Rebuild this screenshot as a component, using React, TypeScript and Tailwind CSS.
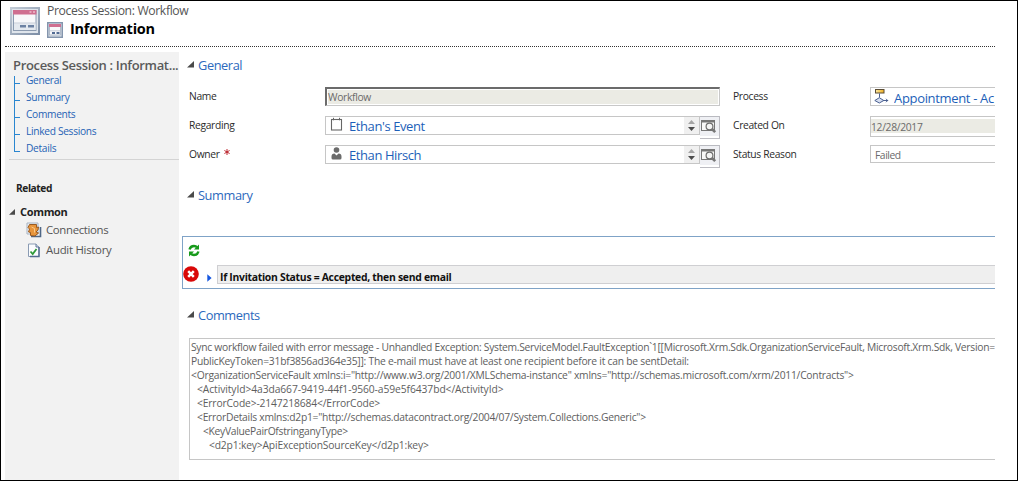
import type { ReactNode } from "react";

function LargeWindowIcon() {
  return (
    <svg className="h-[28px] w-[30px]" viewBox="0 0 30 28">
      <defs>
        <linearGradient id="winframe" x1="0" y1="0" x2="1" y2="1">
          <stop offset="0" stopColor="#c3ccd6" />
          <stop offset="1" stopColor="#7d8ea6" />
        </linearGradient>
      </defs>
      <rect x="1" y="1" width="28" height="26" fill="#dfe5ec" stroke="url(#winframe)" strokeWidth="2" />
      <rect x="3.500" y="3.500" width="22.500" height="20" fill="#f8f8fa" stroke="#8c9bb0" />
      <rect x="3" y="3" width="23.500" height="4.500" fill="#cf6f90" />
      <path d="M19.500 4h2v2h-2zM23 4h2v2h-2z" fill="#e6a9bc" />
      <rect x="4" y="16.500" width="21.500" height="6.500" fill="#e4e9ef" />
      <path d="M4 16h21.500" stroke="#b9c2ce" strokeWidth="0.800" />
      <path d="M10 18h6v2.500h-6zM18 18h6v2.500h-6z" fill="#6d82a3" />
    </svg>
  );
}

function SmallWindowIcon() {
  return (
    <svg className="h-[16px] w-[16px]" viewBox="0 0 16 16">
      <rect x="0.750" y="0.750" width="14.500" height="14.500" fill="#dfe5ec" stroke="#8495ad" strokeWidth="1.500" />
      <rect x="2.500" y="2.500" width="11" height="10.500" fill="#f8f8fa" stroke="#a3afbf" strokeWidth="0.800" />
      <rect x="2" y="2" width="12" height="3" fill="#cf6f90" />
      <path d="M5 10h3v2H5zM9.500 10h3v2h-3z" fill="#526b93" />
      <path d="M3 8.800h10" stroke="#b9c2ce" strokeWidth="0.800" />
    </svg>
  );
}

function Corner({ className }: { className: string }) {
  return (
    <svg className={className} viewBox="0 0 7 7">
      <path d="M7 0v6.6H0z" fill="#4a4a4a" />
    </svg>
  );
}

function Heading({ children }: { children: ReactNode }) {
  return (
    <h2 className="flex h-[26px] items-center pt-[2px] pl-[8px] text-[12.8px] tracking-[-0.42px] text-[#2c69bd]">
      <Corner className="mr-[4px] mb-[4px] h-[7px] w-[7px]" />
      {children}
    </h2>
  );
}

function Label({ children, required }: { children: string; required?: boolean }) {
  return (
    <div className="flex h-[18px] text-[10.3px] leading-[19px] tracking-[-0.34px] text-[#2b2b2b]">
      {children}
      {required && (
        <svg className="mt-[4px] ml-[4px] h-[6px] w-[6px]" viewBox="0 0 6 6">
          <path d="M3 0v6M0.400 1.500l5.200 3M5.600 1.500l-5.200 3" stroke="#b5121b" strokeWidth="0.900" />
        </svg>
      )}
    </div>
  );
}

function Lookup({ icon, children }: { icon: ReactNode; children: string }) {
  return (
    <div className="flex w-[395px]">
      <div className="flex h-[19px] w-[375px] border border-[#c6c6c6]">
        <div className="flex w-[23px] justify-start pl-[4px]">{icon}</div>
        <span className="flex-1 text-[13px] leading-[19px] tracking-[-0.41px] text-[#1d5fb8]">{children}</span>
        <div className="flex w-[15px] items-center justify-center bg-[#f0f0f0]">
          <svg className="h-[11px] w-[7px]" viewBox="0 0 7 11">
            <path d="M0 4L3.5 0 7 4z" fill="#a5a5a5" />
            <path d="M0 7h7l-3.500 4z" fill="#4c4c4c" />
          </svg>
        </div>
      </div>
      <svg className="h-[24px] w-[20px]" viewBox="0 0 20 24">
        <rect width="19.500" height="23" fill="#eff0f4" />
        <path d="M0 0.500h19.500" stroke="#b9bac0" />
        <path d="M19.500 0v23M0 22.500h20" stroke="#bcbcc2" />
        <rect x="0" y="20" width="19" height="2" fill="#fff" />
        <rect x="1.500" y="4.500" width="13" height="10" fill="#f9f9f9" stroke="#777" />
        <path d="M1 4h14v2.500H1z" fill="#777" />
        <circle cx="9.500" cy="10.500" r="3.400" fill="#f4f4f4" stroke="#6d6d6d" strokeWidth="1.200" />
        <path d="M12 13l3.200 3.200" stroke="#777" strokeWidth="2.600" />
      </svg>
    </div>
  );
}

const sections = ["General", "Summary", "Comments", "Linked Sessions", "Details"];

function Sidebar() {
  return (
    <aside className="flex w-[174px] shrink-0 flex-col bg-[#f2f2f2]">
      <div className="h-[24px] pl-[8px] text-[13px] leading-[27px] font-semibold tracking-[-0.34px] whitespace-nowrap text-[#5a5a5a]">
        Process Session : Informat...
      </div>
      <nav className="ml-[9px] flex h-[76px] flex-col border-l border-[#2a86d0]">
        {sections.map((s) => (
          <a key={s} className="flex h-[17px] shrink-0 text-[10.2px] leading-[8px] tracking-[-0.31px] text-[#1f62b5]">
            <span className="mr-[6px] h-[8px] w-[5px] border-b border-[#2a86d0]" />
            {s}
          </a>
        ))}
      </nav>
      <div className="mt-[7px] ml-[4px] h-px bg-[#d4d4d4]" />
      <div className="mt-[19px] pl-[11px] text-[10.2px] leading-[18px] font-bold tracking-[-0.42px] text-[#222]">Related</div>
      <div className="mt-[6px] flex h-[18px] items-center pl-[4px] text-[11px] font-bold tracking-[-0.33px] text-[#222]">
        <Corner className="mr-[5px] h-[6px] w-[6px]" />
        Common
      </div>
      <div className="flex h-[18px] items-center pl-[21px] text-[11.4px] tracking-[-0.34px] text-[#555]">
        <svg className="mr-[4px] h-[16px] w-[16px]" viewBox="0 0 16 16">
          <path d="M1 1h11v11H1z" fill="#e9eef4" stroke="#a7b3c1" />
          <path d="M5 14.500h9.500V5" fill="none" stroke="#4f6786" strokeWidth="1.600" />
          <path d="M3.500 2.500h7v3l2-.5-.5 3-2 2 2.500 1-3.500 3-4.500-.5v-3l-2-.5 1-3-1.500-1.500z" fill="#e8953a" stroke="#925016" strokeWidth="0.900" />
          <path d="M5.500 5l3 1.500v4" fill="none" stroke="#f9c88a" />
        </svg>
        Connections
      </div>
      <div className="mt-[2px] flex h-[18px] items-center pl-[21px] text-[11.4px] tracking-[-0.27px] text-[#555]">
        <svg className="mr-[4px] h-[16px] w-[16px]" viewBox="0 0 16 16">
          <path d="M2.500 2h7.500l3 3v9.500H2.500z" fill="#fbfcfe" stroke="#8a9bb3" />
          <path d="M10 2v3h3" fill="#d4dde9" stroke="#60769a" />
          <path d="M13 5v9.500H4" fill="none" stroke="#516a90" strokeWidth="1.400" />
          <path d="M4.500 9.500l2.200 2.500L10.500 7" fill="none" stroke="#2f9a3a" strokeWidth="1.800" />
        </svg>
        Audit History
      </div>
    </aside>
  );
}

function GeneralFields() {
  return (
    <div className="mt-[9px] grid h-[87px] grid-cols-[136px_408px_137px_125px] grid-rows-[29px_29px_29px] pl-[10px]">
      <Label>Name</Label>
      <div className="h-[19px] w-[395px] border border-t-2 border-l-2 border-[#c8c8c8] border-t-[#6b6b6b] border-l-[#6b6b6b] p-px">
        <div className="h-full bg-[#ebebe4] text-[10.3px] leading-[15px] tracking-[-0.32px] text-[#6a6a6a]">Workflow</div>
      </div>
      <Label>Process</Label>
      <div className="flex h-[19px] border border-r-0 border-[#c6c6c6]">
        <svg className="mt-[1px] ml-[3px] h-[15px] w-[15px] shrink-0" viewBox="0 0 15 15">
          <defs>
            <linearGradient id="step" x1="0" x2="1">
              <stop offset="0" stopColor="#fbe9a4" />
              <stop offset="1" stopColor="#f0ae1c" />
            </linearGradient>
          </defs>
          <rect x="1.500" y="0.500" width="8.500" height="3.500" fill="url(#step)" stroke="#5a4c34" />
          <path d="M5.500 4.500v4M8 11.500h6M12 9.800l1.700 1.700-1.700 1.700" fill="none" stroke="#4a5f8f" />
          <path d="M0.800 11.500l4.500-2.800 4.500 2.800-4.500 2.500z" fill="#d6def0" stroke="#4a5f8f" />
        </svg>
        <span className="ml-[5px] w-[101px] overflow-hidden text-[13px] leading-[20px] tracking-[-0.33px] whitespace-nowrap text-[#1d5fb8]">
          Appointment - Ac
        </span>
      </div>

      <Label>Regarding</Label>
      <Lookup
        icon={
          <svg className="h-[14px] w-[13px]" viewBox="0 0 13 14">
            <rect x="1.500" y="2.500" width="10" height="10.500" fill="#fff" stroke="#666" strokeWidth="1.100" />
            <path d="M3.500 0.800v2.500M9.500 0.800v2.500" stroke="#666" />
          </svg>
        }
      >
        Ethan's Event
      </Lookup>
      <Label>Created On</Label>
      <div className="h-[21px] border border-r-0 border-[#c6c6c6] pt-[2px]">
        <div className="h-[14px] bg-[#ebebe4] text-[10.3px] leading-[16px] tracking-[-0.32px] text-[#6a6a6a]">12/28/2017</div>
      </div>

      <Label required>Owner</Label>
      <Lookup
        icon={
          <svg className="mt-[1px] h-[13px] w-[13px]" viewBox="0 0 13 13">
            <circle cx="6.500" cy="3" r="2.800" fill="#6b6b6b" />
            <path d="M1.500 9.500q0-3 3-3l2 2 2-2q3 0 3 3v1.500q0 1.500-1.500 1.500h-7q-1.500 0-1.500-1.500z" fill="#6b6b6b" />
          </svg>
        }
      >
        Ethan Hirsch
      </Lookup>
      <Label>Status Reason</Label>
      <div className="h-[18px] border border-r-0 border-[#c6c6c6] pl-[4px] text-[10.3px] leading-[18px] tracking-[-0.45px] text-[#6a6a6a]">
        Failed
      </div>
    </div>
  );
}

function Steps() {
  return (
    <div className="mt-[28px] ml-[3px] flex h-[53px] flex-col border border-r-0 border-[#7fa3c7]">
      <div className="h-[28px] pt-[7px] pl-[5px]">
        <svg className="h-[13px] w-[12px]" viewBox="0 0 12 13">
          <path d="M1.500 5.500Q2.500 2 6 2q2 0 3 1.300" fill="none" stroke="#179a1b" strokeWidth="2.400" />
          <path d="M11 0.500v5H6z" fill="#179a1b" />
          <path d="M10.500 7.500Q9.500 11 6 11q-2 0-3-1.300" fill="none" stroke="#179a1b" strokeWidth="2.400" />
          <path d="M1 12.500v-5h5z" fill="#179a1b" />
        </svg>
      </div>
      <div className="flex">
        <svg className="mt-px h-[16px] w-[16px]" viewBox="0 0 16 16">
          <circle cx="8" cy="8" r="7.800" fill="#d90808" />
          <path d="M5.200 5.200l5.600 5.600M10.800 5.200l-5.600 5.600" stroke="#fff" strokeWidth="2.500" />
        </svg>
        <svg className="mt-[9px] ml-[8px] h-[8px] w-[5px]" viewBox="0 0 5 8">
          <path d="M0.300 0.300L4.600 4 0.300 7.700z" fill="#1557e0" />
        </svg>
        <div className="ml-[5px] h-[19px] flex-1 border border-r-0 border-[#cfcfd2] bg-[#efefef] pl-[2px] text-[10.4px] leading-[22px] font-bold tracking-[-0.285px] text-[#111]">
          If Invitation Status = Accepted, then send email
        </div>
      </div>
    </div>
  );
}

function Trace() {
  return (
    <div className="mt-[10px] ml-[10px] h-[122px] overflow-hidden border border-r-0 border-[#c6c6c6] pt-px pl-px text-[10.3px] leading-[14px] whitespace-pre text-[#5e5e5e]">
      <div className="tracking-[-0.275px]">
        {"Sync workflow failed with error message - Unhandled Exception: System.ServiceModel.FaultException`1[[Microsoft.Xrm.Sdk.OrganizationServiceFault, Microsoft.Xrm.Sdk, Version="}
      </div>
      <div className="tracking-[-0.24px]">
        {"PublicKeyToken=31bf3856ad364e35]]: The e-mail must have at least one recipient before it can be sentDetail:"}
      </div>
      <div className="tracking-[-0.237px]">
        {'<OrganizationServiceFault xmlns:i="http://www.w3.org/2001/XMLSchema-instance" xmlns="http://schemas.microsoft.com/xrm/2011/Contracts">'}
      </div>
      <div className="pl-[6px] tracking-[-0.085px]">{"<ActivityId>4a3da667-9419-44f1-9560-a59e5f6437bd</ActivityId>"}</div>
      <div className="pl-[6px] tracking-[-0.15px]">{"<ErrorCode>-2147218684</ErrorCode>"}</div>
      <div className="pl-[6px] tracking-[-0.253px]">
        {'<ErrorDetails xmlns:d2p1="http://schemas.datacontract.org/2004/07/System.Collections.Generic">'}
      </div>
      <div className="pl-[12px] tracking-[-0.29px]">{"<KeyValuePairOfstringanyType>"}</div>
      <div className="pl-[18px] tracking-[-0.17px]">{"<d2p1:key>ApiExceptionSourceKey</d2p1:key>"}</div>
    </div>
  );
}

export default function App() {
  return (
    <div className="flex h-[481px] w-[1018px] flex-col overflow-hidden border border-black bg-white pr-[22px] pl-[4px] font-['Open_Sans','Noto_Sans',sans-serif]">
      <header className="flex h-[46px] shrink-0 border-b border-dotted border-[#333]">
        <div className="w-[42px] pt-[6px] pl-[5px]">
          <LargeWindowIcon />
        </div>
        <div>
          <div className="h-[20px] text-[12.2px] leading-[19px] tracking-[-0.36px] text-[#555]">Process Session: Workflow</div>
          <div className="flex">
            <div className="mt-px w-[23px]">
              <SmallWindowIcon />
            </div>
            <h1 className="text-[14.5px] leading-[16px] font-bold tracking-[-0.27px] text-black">Information</h1>
          </div>
        </div>
      </header>
      <div className="mt-[5px] flex min-h-0 flex-1">
        <Sidebar />
        <main className="min-w-0 flex-1">
          <Heading>General</Heading>
          <GeneralFields />
          <div className="h-[8px]" />
          <Heading>Summary</Heading>
          <Steps />
          <div className="h-[13px]" />
          <Heading>Comments</Heading>
          <Trace />
        </main>
      </div>
    </div>
  );
}
